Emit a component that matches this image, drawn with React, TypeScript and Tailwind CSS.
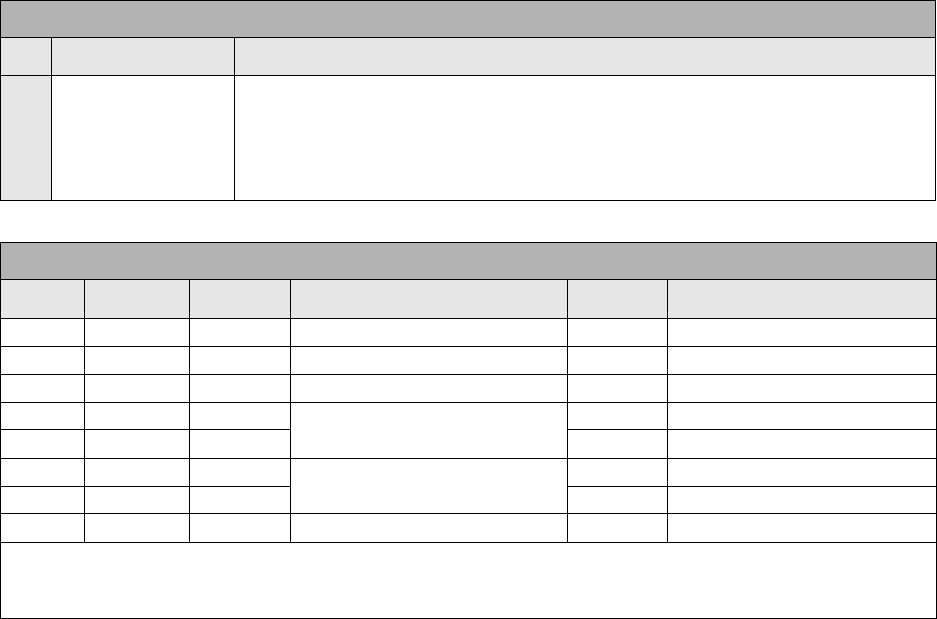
import React from "react";

const W = "bg-white";
const H1 = "bg-[#b3b3b3]";
const H2 = "bg-[#e6e6e6]";

function Row6() {
  return (
    <>
      <div className={W} />
      <div className={W} />
      <div className={W} />
      <div className={W} />
      <div className={W} />
      <div className={W} />
    </>
  );
}

function SplitRows() {
  return (
    <>
      <div className={W} />
      <div className={W} />
      <div className={W} />
      <div className={`${W} row-span-2`} />
      <div className={W} />
      <div className={W} />
      <div className={W} />
      <div className={W} />
      <div className={W} />
      <div className={W} />
      <div className={W} />
    </>
  );
}

export default function App() {
  return (
    <div className="w-[937px] bg-white font-['Liberation_Sans',Arial,sans-serif]">
      <div className="grid w-fit grid-cols-[50px_182px_700px] grid-rows-[36px_37px_124px] gap-px bg-black p-px">
        <div className={`${H1} col-span-3`} />
        <div className={H2} />
        <div className={H2} />
        <div className={H2} />
        <div className={H2} />
        <div className={W} />
        <div className={W} />
      </div>
      <div className="mt-[41px] grid w-fit grid-cols-[83px_104px_100px_276px_99px_268px] grid-rows-[36px_38px_27px_27px_27px_26px_28px_27px_26px_28px_75px] gap-px bg-black p-px">
        <div className={`${H1} col-span-6`} />
        <div className={H2} />
        <div className={H2} />
        <div className={H2} />
        <div className={H2} />
        <div className={H2} />
        <div className={H2} />
        <Row6 />
        <Row6 />
        <Row6 />
        <SplitRows />
        <SplitRows />
        <Row6 />
        <div className={`${W} col-span-6`} />
      </div>
    </div>
  );
}
